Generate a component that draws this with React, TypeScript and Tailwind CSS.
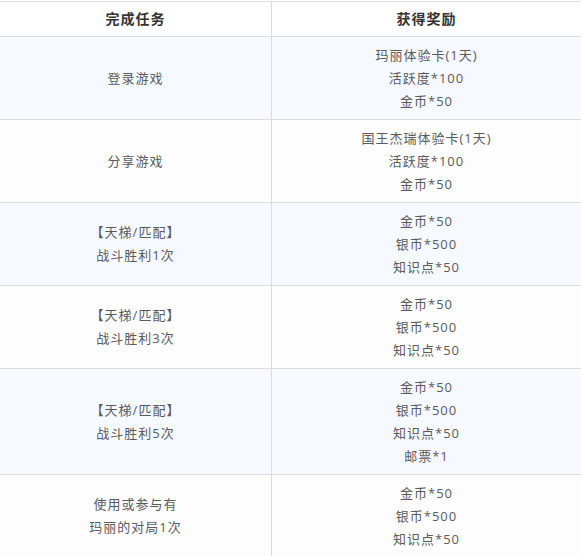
import React from "react";

const rows = [
  { task: ["登录游戏"], rewards: ["玛丽体验卡(1天)", "活跃度*100", "金币*50"] },
  { task: ["分享游戏"], rewards: ["国王杰瑞体验卡(1天)", "活跃度*100", "金币*50"] },
  { task: ["【天梯/匹配】", "战斗胜利1次"], rewards: ["金币*50", "银币*500", "知识点*50"] },
  { task: ["【天梯/匹配】", "战斗胜利3次"], rewards: ["金币*50", "银币*500", "知识点*50"] },
  { task: ["【天梯/匹配】", "战斗胜利5次"], rewards: ["金币*50", "银币*500", "知识点*50", "邮票*1"] },
  { task: ["使用或参与有", "玛丽的对局1次"], rewards: ["金币*50", "银币*500", "知识点*50"] },
];

const App = () => {
  return (
    <div
      className="w-[581px] pt-px bg-white"
      style={{ fontFamily: '"Open Sans", "Noto Sans CJK SC", sans-serif' }}
    >
      <div className="border-t border-[#e6dede]">
        <div className="grid grid-cols-[272px_1fr] border-b border-[#dcdcdc] bg-white">
          <div className="border-r border-[#dcdcdc] py-[6px] text-center text-[14px] font-bold leading-[22px] tracking-[1px] text-[#333]">
            完成任务
          </div>
          <div className="py-[6px] text-center text-[14px] font-bold leading-[22px] tracking-[1px] text-[#333]">
            获得奖励
          </div>
        </div>
        {rows.map((row, i) => (
          <div
            key={i}
            className={`grid grid-cols-[272px_1fr] border-b border-[#dcdcdc] ${
              i % 2 === 0 ? "bg-[#f6f9ff]" : "bg-[#fdfdfd]"
            }`}
          >
            <div className="flex flex-col items-center justify-center border-r border-[#dcdcdc] py-[6.5px] text-[13px] leading-[23px] tracking-[1px] text-[#5a5a5a]">
              {row.task.map((t) => (
                <div key={t}>{t}</div>
              ))}
            </div>
            <div className="flex flex-col items-center justify-center py-[6.5px] text-[13px] leading-[23px] tracking-[1px] text-[#5a5a5a]">
              {row.rewards.map((r) => (
                <div key={r}>{r}</div>
              ))}
            </div>
          </div>
        ))}
      </div>
    </div>
  );
};

export default App;
